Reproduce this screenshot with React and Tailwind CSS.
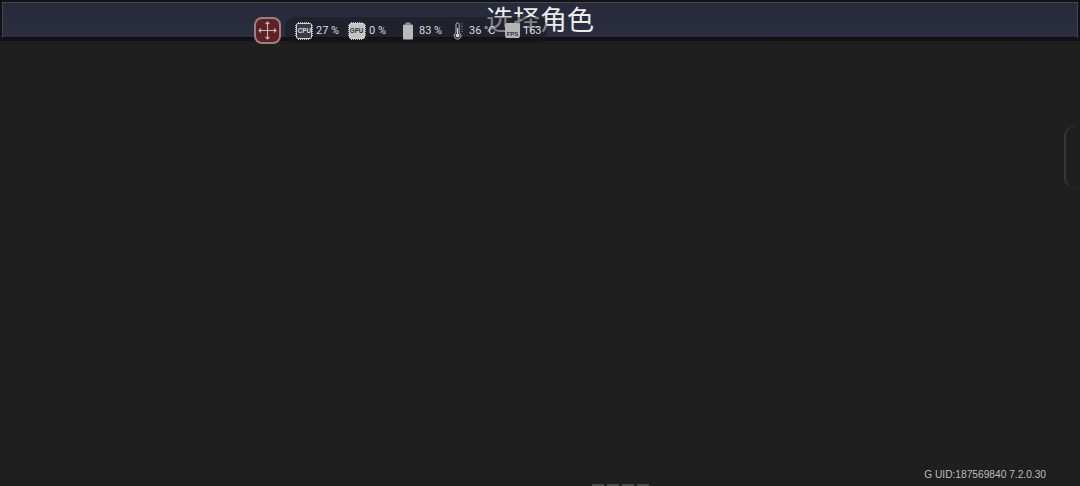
import React from 'react';

function ChipIcon({ label, solid }) {
  return (
    <div className="relative flex items-center justify-center w-[18px] h-[18px]">
      <svg className="absolute inset-0" width="18" height="18" viewBox="0 0 18 18" fill="none">
        <rect x="1.5" y="1.5" width="15" height="15" rx="1.5" fill={solid ? '#c4c4c4' : '#3a3c43'} stroke="#d0d0d0" />
        <path d="M3 0.5h12M3 17.5h12M0.5 3v12M17.5 3v12" stroke="#b8b8b8" strokeWidth="1" strokeDasharray="1 1" />
      </svg>
      <span className={`relative font-['Liberation_Sans',sans-serif] text-[7px] font-bold leading-none scale-x-90 ${solid ? 'text-[#33353c]' : 'text-[#dedede]'}`}>{label}</span>
    </div>
  );
}

function BatteryIcon() {
  return (
    <svg width="12" height="18" viewBox="0 0 12 18">
      <rect x="3.5" y="0.5" width="5" height="2" fill="#8f9094" />
      <rect x="1" y="2.5" width="10" height="15" rx="1" fill="#b9babc" />
    </svg>
  );
}

function ThermoIcon() {
  return (
    <svg width="12" height="18" viewBox="0 0 12 18" fill="none">
      <path d="M4 2.5a1.6 1.6 0 0 1 3.2 0v8.2a3.4 3.4 0 1 1-3.2 0z" stroke="#b8b8b8" strokeWidth="1" />
      <circle cx="5.6" cy="13.6" r="2" fill="#d0d0d0" />
      <rect x="5" y="6" width="1.2" height="6" fill="#d0d0d0" />
      <path d="M9 2h2M9 4.5h2M9 7h2M9 9.5h2" stroke="#77787c" strokeWidth="0.8" />
    </svg>
  );
}

function FpsIcon() {
  return (
    <div className="flex items-end justify-center w-[15px] h-[15px] rounded-[2px] bg-[#b4b4b5] pb-[1px]">
      <span className="font-['Liberation_Sans',sans-serif] text-[6px] font-bold leading-none text-[#33353c]">FPS</span>
    </div>
  );
}

function MoveIcon() {
  return (
    <svg width="21" height="21" viewBox="0 0 21 21" fill="none" stroke="#cdb4b4" strokeWidth="1.1">
      <path d="M10.5 2v17M2 10.5h17" />
      <path d="M8.5 4l2-2 2 2M8.5 17l2 2 2-2M4 8.5l-2 2 2 2M17 8.5l2 2-2 2" />
    </svg>
  );
}

function Stat({ icon, value, width, gap }) {
  return (
    <div className={`flex items-center ${width} ${gap}`}>
      {icon}
      <span className="font-['Roboto',sans-serif] text-[11px] leading-none text-[#dcdcdc]">{value}</span>
    </div>
  );
}

export default function App() {
  return (
    <div className="relative w-[1080px] h-[486px] overflow-hidden bg-[#1f1f1f]">
      {/* Title bar */}
      <header className="h-[41px] bg-[#121215] pt-[2px] pb-[3px] px-[2px]">
        <div className="h-[36px] flex items-center justify-center border border-[#43464f] border-b-[#0e0e11] bg-gradient-to-b from-[#262a3a] to-[#2a2e40]">
          <h1 className="-mt-[4px] font-['Noto_Sans_CJK_SC',sans-serif] text-[27px] leading-none text-[#ececec]">选择角色</h1>
        </div>
      </header>

      {/* Performance overlay */}
      <div className="absolute left-[254px] top-[17px] flex items-center gap-[4px]">
        <button className="flex items-center justify-center w-[27px] h-[27px] rounded-[8px] border-2 border-[#9c8080] bg-[#5e1f25]">
          <MoveIcon />
        </button>
        <div className="flex items-center h-[27px] w-[262px] pl-[10px] rounded-[10px] bg-[#15161b]/50">
          <Stat icon={<ChipIcon label="CPU" />} value="27 %" width="w-[53px]" gap="gap-[3px]" />
          <Stat icon={<ChipIcon label="GPU" solid />} value="0 %" width="w-[54px]" gap="gap-[3px]" />
          <Stat icon={<BatteryIcon />} value="83 %" width="w-[50px]" gap="gap-[5px]" />
          <Stat icon={<ThermoIcon />} value="36 °C" width="w-[53px]" gap="gap-[5px]" />
          <Stat icon={<FpsIcon />} value="163" gap="gap-[3px]" />
        </div>
      </div>

      {/* Side handle */}
      <div className="absolute left-[1064px] top-[126px] w-[12px] h-[62px] rounded-l-[10px] border-l-2 border-t border-b border-l-[#343537] border-t-[#2c2d2f] border-b-[#2c2d2f]" />

      {/* Version */}
      <p className="absolute right-[34px] top-[468px] font-['Liberation_Sans',sans-serif] text-[10.2px] leading-[13px] text-[#bdbdbd]">G UID:187569840 7.2.0.30</p>

      {/* Clipped text at the bottom edge */}
      <div className="absolute left-[592px] top-[484px] flex gap-[3px]">
        <div className="w-[12px] h-[2px] bg-[#4a4a4a]" />
        <div className="w-[12px] h-[2px] bg-[#4a4a4a]" />
        <div className="w-[12px] h-[2px] bg-[#4a4a4a]" />
        <div className="w-[12px] h-[2px] bg-[#4a4a4a]" />
      </div>
    </div>
  );
}
